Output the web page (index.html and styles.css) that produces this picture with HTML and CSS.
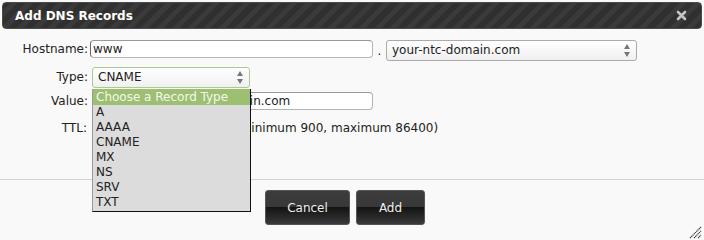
FILE: index.html
```html
<!DOCTYPE html>
<html>
<head>
<meta charset="utf-8">
<link rel="stylesheet" href="styles.css">
</head>
<body>
<div class="dialog">
  <div class="titlebar">
    <span class="title">Add DNS Records</span>
    <svg class="close" width="11" height="11" viewBox="0 0 11 11"><path d="M2 2 L9 9 M9 2 L2 9" stroke="#c4c4c4" stroke-width="2.6" stroke-linecap="round"/></svg>
  </div>
  <div class="form">
    <div class="row row-host">
      <label class="lbl">Hostname:</label>
      <input class="txt host" type="text" value="www">
      <span class="dot">.</span>
      <div class="sel domain"><span>your-ntc-domain.com</span><span class="arrows"><i class="up"></i><i class="down"></i></span></div>
    </div>
    <div class="row row-type">
      <label class="lbl">Type:</label>
      <div class="sel type"><span>CNAME</span><span class="arrows"><i class="up"></i><i class="down"></i></span></div>
      <ul class="dropdown">
        <li class="hl">Choose a Record Type</li>
        <li>A</li>
        <li>AAAA</li>
        <li>CNAME</li>
        <li>MX</li>
        <li>NS</li>
        <li>SRV</li>
        <li>TXT</li>
      </ul>
    </div>
    <div class="row row-value">
      <label class="lbl">Value:</label>
      <input class="txt value" type="text" value="myhosting.your-ntc-domain.com">
    </div>
    <div class="row row-ttl">
      <label class="lbl">TTL:</label>
      <input class="txt ttl" type="text" value="3600">
      <span class="hint">(minimum 900, maximum 86400)</span>
    </div>
  </div>
  <div class="sep"></div>
  <div class="buttons">
    <button class="btn cancel">Cancel</button>
    <button class="btn add">Add</button>
  </div>
  <svg class="grip" width="14" height="14" viewBox="0 0 14 14"><path d="M2 13 L13 2 M6 13 L13 6 M10 13 L13 10" stroke="#333" stroke-width="1.2" stroke-dasharray="1.2 0.6"/></svg>
</div>
</body>
</html>
```

FILE: styles.css
```css
html, body {
  margin: 0;
  padding: 0;
  background: #f9f9f9;
}
body {
  font-family: "DejaVu Sans", sans-serif;
  font-size: 12px;
  color: #222;
  width: 704px;
  height: 239px;
  overflow: hidden;
}
.dialog {
  position: relative;
  width: 704px;
  height: 239px;
}
.titlebar {
  margin: 2px 2px 0 2px;
  height: 27px;
  box-sizing: border-box;
  border: 1px solid #4a4a4a;
  border-radius: 4px;
  background: repeating-linear-gradient(-45deg, #303030 0px, #303030 6px, #3a3a3a 6px, #3a3a3a 11px);
  display: flex;
  align-items: center;
  justify-content: space-between;
  padding: 0 14px 0 12px;
}
.title {
  color: #fff;
  font-weight: bold;
  font-size: 12px;
  padding-top: 1px;
}
.close {
  display: block;
}
.form {
  padding-top: 11px;
}
.row {
  display: flex;
  align-items: flex-start;
  position: relative;
}
.lbl {
  width: 88px;
  text-align: right;
  line-height: 18px;
  flex: none;
}
.row-host { height: 21px; margin-bottom: 6px; }
.row-type { height: 21px; margin-bottom: 4px; }
.row-type .lbl { line-height: 21px; }
.row-value { height: 18px; margin-bottom: 9px; }
.row-ttl { height: 18px; }
.row-ttl .lbl { width: 87px; }
.txt {
  box-sizing: border-box;
  height: 18px;
  margin: 0;
  border: 1px solid #b4b4b4;
  border-left-color: #666;
  border-top-color: #999;
  border-radius: 4px;
  background: #fff;
  font-family: "DejaVu Sans", sans-serif;
  font-size: 12px;
  color: #222;
  padding: 0 2px;
  outline: none;
}
.host { width: 283px; margin-left: 2px; }
.value { width: 281px; margin-left: 4px; }
.ttl { width: 139px; margin-left: 5px; }
.dot {
  width: 13px;
  text-align: center;
  line-height: 22px;
}
.hint {
  margin-left: 4px;
  line-height: 18px;
}
.sel {
  box-sizing: border-box;
  height: 21px;
  border: 1px solid #aaa;
  border-radius: 3px;
  background: linear-gradient(#ffffff, #f0f0f0);
  display: flex;
  align-items: center;
  justify-content: space-between;
  padding: 0 6px 0 5px;
  line-height: 19px;
}
.domain { width: 251px; }
.type {
  width: 158px;
  margin-left: 4px;
  border-color: #a9c98f;
}
.arrows {
  display: flex;
  flex-direction: column;
  gap: 3px;
  align-items: center;
}
.arrows i {
  display: block;
  width: 0;
  height: 0;
  border-left: 3px solid transparent;
  border-right: 3px solid transparent;
}
.arrows .up { border-bottom: 5px solid #777; }
.arrows .down { border-top: 5px solid #777; }
.dropdown {
  position: absolute;
  left: 92px;
  top: 22px;
  width: 159px;
  box-sizing: border-box;
  margin: 0;
  padding: 0 0 1px 0;
  list-style: none;
  background: #dcdcdc;
  border-left: 1px solid #9a9a9a;
  border-right: 1px solid #111;
  border-bottom: 1px solid #111;
  z-index: 5;
}
.dropdown li {
  height: 15px;
  line-height: 15px;
  padding-left: 3px;
  color: #222;
}
.dropdown li.hl {
  background: #9dbf72;
  color: #f4f7ee;
  height: 16px;
  line-height: 16px;
}
.sep {
  margin-top: 42px;
  height: 1px;
  background: #d2d2d2;
}
.buttons {
  display: flex;
  gap: 6px;
  padding-left: 265px;
  margin-top: 10px;
}
.btn {
  box-sizing: border-box;
  height: 35px;
  border: 1px solid #555;
  border-radius: 3px;
  background: linear-gradient(#3c3c3c 0%, #383838 48%, #141414 50%, #262626 75%, #3a3a3a 100%);
  color: #eee;
  font-family: "DejaVu Sans", sans-serif;
  font-size: 12px;
  padding: 0;
}
.cancel { width: 85px; }
.add { width: 69px; }
.grip {
  position: absolute;
  right: 2px;
  bottom: 2px;
}
```
